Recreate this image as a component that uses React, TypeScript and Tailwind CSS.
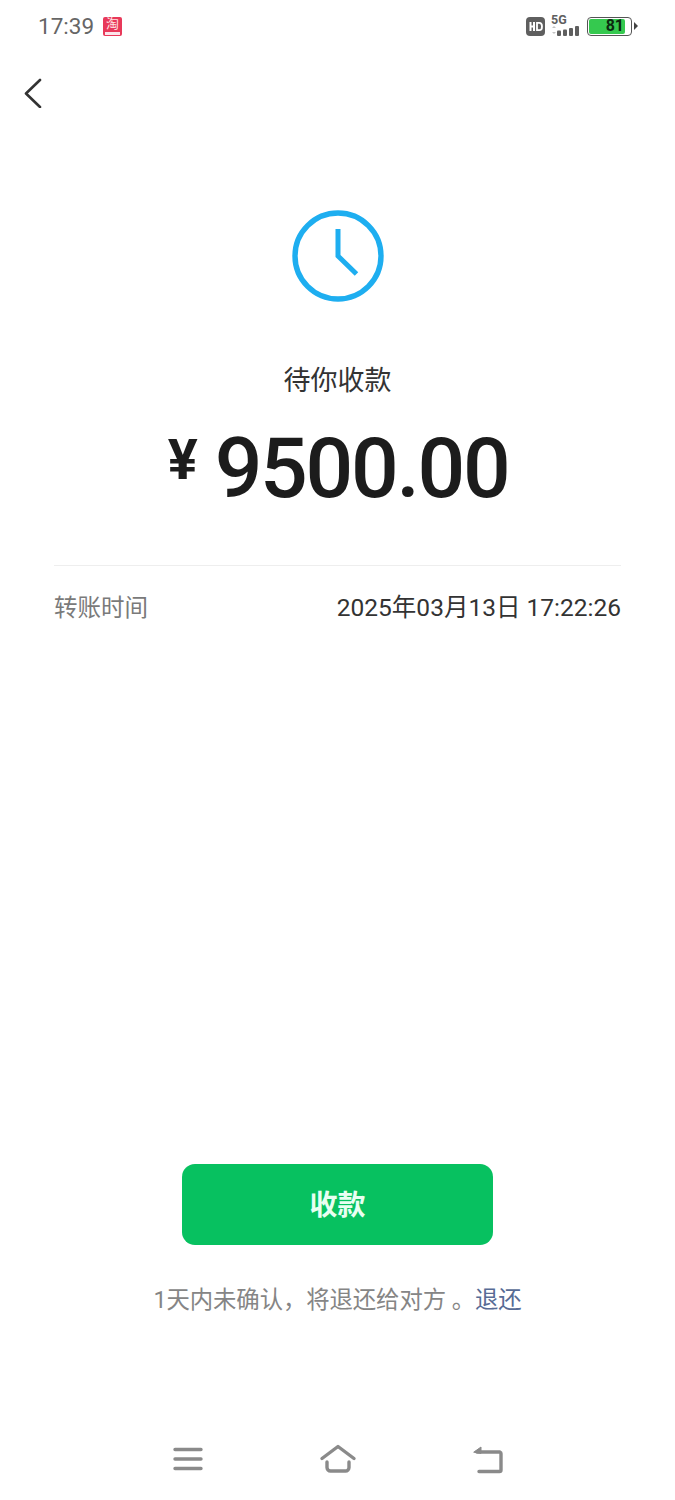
export default function App() {
  const cjk = "font-['Roboto','Noto_Sans_CJK_SC',sans-serif]";
  return (
    <div className={`w-[675px] h-[1500px] bg-white flex flex-col ${cjk}`}>
      <div className="h-[52px] pl-[38px] pr-[37px] flex items-center justify-between">
        <div className="flex items-center gap-[9px]">
          <span className="text-[22.5px] leading-none text-[#666666]">17:39</span>
          <div className="w-[19px] h-[19px] rounded-[2px] bg-[#e8395a] flex flex-col items-center overflow-hidden">
            <span className="h-[14px] text-[13px] leading-[14px] text-[#ffe3e3]">淘</span>
            <span className="mt-[1px] w-[15px] h-[3px] bg-[#fbe4ea]" />
          </div>
        </div>
        <div className="flex items-center">
          <svg width="19" height="19" viewBox="0 0 19 19" className="mr-[6px]">
            <rect width="19" height="19" rx="4" fill="#5f5f5f" />
            <rect x="3.5" y="5" width="2" height="9" fill="#fff" />
            <rect x="7" y="5" width="2" height="9" fill="#fff" />
            <rect x="4" y="8.5" width="4" height="2" fill="#fff" />
            <path d="M11 5.8h2.4c1.8 0 2.6 1.4 2.6 3.7s-.8 3.7-2.6 3.7H11z" fill="none" stroke="#fff" strokeWidth="1.8" />
          </svg>
          <div className="relative w-[30px] h-[22px] mr-[6px]">
            <span className="absolute left-0 top-[-1px] text-[12.5px] font-bold leading-[12px] text-[#5f5f5f]">5G</span>
            <svg width="30" height="22" viewBox="0 0 30 22" className="absolute left-0 top-0">
              <path d="M1 13l2-2 2 2zM1 17l2 2 2-2z" fill="#c4c4c4" />
              <rect x="6" y="15.5" width="4" height="5.5" rx="1" fill="#5f5f5f" />
              <rect x="12" y="14.5" width="4" height="6.5" rx="1" fill="#5f5f5f" />
              <rect x="18" y="13" width="4" height="8" rx="1" fill="#5f5f5f" />
              <rect x="24" y="11" width="4" height="10" rx="1" fill="#5f5f5f" />
            </svg>
          </div>
          <div className="w-[45px] h-[19px] rounded-[4px] border border-[#555555] p-[1px] flex">
            <div className="w-[36px] h-full rounded-[2px] bg-[#35c94f] flex items-center justify-end pr-[1px] text-[16px] font-bold leading-none text-[#0c2a10]">81</div>
          </div>
          <div className="ml-[2px] w-0 h-0 border-y-[4px] border-y-transparent border-l-[4px] border-l-[#444444]" />
        </div>
      </div>

      <div className="h-[82px] pl-[24px] pt-[26px]">
        <svg width="18" height="30" viewBox="0 0 18 30" fill="none" stroke="#333333" strokeWidth="2.6" strokeLinecap="round" strokeLinejoin="round">
          <path d="M16 2 2 15.5 16 29" />
        </svg>
      </div>

      <div className="flex flex-col items-center">
        <svg width="94" height="94" viewBox="0 0 94 94" fill="none" stroke="#1eaef0" className="mt-[75px]">
          <circle cx="47" cy="47" r="43" strokeWidth="5.4" />
          <path d="M47 20v27l18.5 18" strokeWidth="5" />
        </svg>
        <div className="mt-[58px] text-[27px] leading-[40px] text-[#333333]">待你收款</div>
        <div className="mt-[23px] flex items-start h-[91px]">
          <span className="text-[56px] font-bold leading-[56px] mt-[8px] ml-[1px] mr-[17px] text-[#1c1c1c]">¥</span>
          <span className="text-[84px] font-medium leading-[90px] tracking-[-2.3px] text-[#1c1c1c]">9500.00</span>
        </div>
      </div>

      <div className="mx-[54px] mt-[50px] border-t border-[#eeeeee] pt-[24px] flex items-center justify-between leading-[36px]">
        <span className="text-[23.5px] text-[#7a7a7a]">转账时间</span>
        <span className="text-[24.5px] text-[#333333]">2025年03月13日 17:22:26</span>
      </div>

      <div className="flex-1 flex flex-col items-center justify-end">
        <button className="w-[311px] h-[81px] pt-[3px] rounded-[13px] bg-[#07c160] text-[28px] font-bold text-[#e9fff2]">收款</button>
        <div className="mt-[37px] text-[23.4px] leading-[36px] tracking-[-0.1px] text-[#858585]">
          1天内未确认，将退还给对方 。<span className="text-[#576b95]">退还</span>
        </div>
        <div className="mt-[125px] mb-[25px] w-[332px] h-[32px] flex items-center justify-between">
          <svg width="32" height="26" viewBox="0 0 32 26" fill="none" stroke="#8a8a8a" strokeWidth="3.4" strokeLinecap="round">
            <path d="M3 3.5h26M3 13h26M3 22.5h26" />
          </svg>
          <svg width="38" height="30" viewBox="0 0 38 30" fill="none" stroke="#8a8a8a" strokeWidth="3.4" strokeLinecap="round" strokeLinejoin="round">
            <path d="M3 14.5 19 2.5 35 14.5M8 18v5.5a3.5 3.5 0 0 0 3.5 3.5h15a3.5 3.5 0 0 0 3.5-3.5V18" />
          </svg>
          <svg width="32" height="30" viewBox="0 0 32 30" fill="none" stroke="#8a8a8a" strokeWidth="3.4" strokeLinecap="round" strokeLinejoin="round">
            <path d="M5 8h23a1.5 1.5 0 0 1 1 1.5V26a1.5 1.5 0 0 1-1.5 1.5H7" />
            <path d="M2 8l7-5v6z" fill="#8a8a8a" strokeWidth="1" />
          </svg>
        </div>
      </div>
    </div>
  );
}
